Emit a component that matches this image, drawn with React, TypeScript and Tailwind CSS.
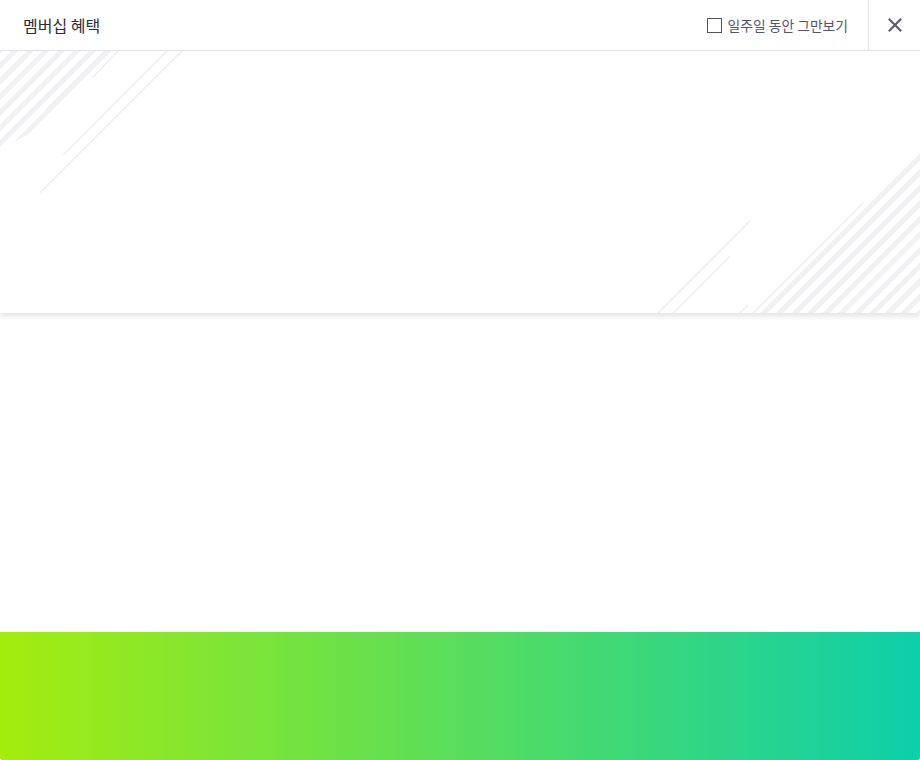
import React from "react";

const font = { fontFamily: '"Noto Sans CJK KR", "Noto Sans", sans-serif' };

function Stripes() {
  return (
    <svg className="absolute inset-0" width="920" height="262" viewBox="0 51 920 262">
      <defs>
        <pattern id="diag" width="11" height="11" patternUnits="userSpaceOnUse" patternTransform="rotate(45)">
          <rect x="0" y="0" width="5" height="11" fill="#f1f1f3" />
        </pattern>
        <clipPath id="tl">
          <polygon points="0,51 112,51 30,133 0,150" />
        </clipPath>
        <clipPath id="br">
          <polygon points="920,152 920,313 758,313" />
        </clipPath>
      </defs>
      <rect x="0" y="51" width="120" height="110" fill="url(#diag)" clipPath="url(#tl)" />
      <rect x="740" y="140" width="180" height="173" fill="url(#diag)" clipPath="url(#br)" />
      <g stroke="#efeff1" strokeWidth="1.6" fill="none">
        <line x1="40" y1="193" x2="182" y2="51" />
        <line x1="63" y1="155" x2="167" y2="51" />
        <line x1="93" y1="77" x2="118" y2="51" />
        <line x1="46" y1="110" x2="105" y2="51" />
        <line x1="658" y1="313" x2="750" y2="221" />
        <line x1="673" y1="313" x2="730" y2="256" />
        <line x1="740" y1="313" x2="748" y2="305" />
        <line x1="753" y1="313" x2="863" y2="203" />
      </g>
    </svg>
  );
}

export default function App() {
  return (
    <div className="w-[920px] h-[760px] flex flex-col bg-white overflow-hidden" style={font}>
      <div className="h-[51px] flex items-center border-b border-[#e6e6e8] shrink-0">
        <p className="pl-[23px] text-[16px] text-[#2b2b3a] flex-1">멤버십 혜택</p>
        <label className="flex items-center gap-[6px] pr-[20px]">
          <span className="w-[15px] h-[15px] border border-[#55556a] bg-white" />
          <span className="text-[13.8px] text-[#55556a]">일주일 동안 그만보기</span>
        </label>
        <button className="w-[52px] h-full border-l border-[#e6e6e8] flex items-center justify-center">
          <svg width="16" height="16" viewBox="0 0 16 16" stroke="#5a5a6e" strokeWidth="2" strokeLinecap="square">
            <line x1="2.5" y1="2.5" x2="13.5" y2="13.5" />
            <line x1="13.5" y1="2.5" x2="2.5" y2="13.5" />
          </svg>
        </button>
      </div>
      <div className="relative h-[262px] shrink-0 bg-white shadow-[0_3px_6px_rgba(0,0,0,0.12)] z-10">
        <Stripes />
      </div>
      <div className="flex-1 bg-white" />
      <div className="h-[128px] shrink-0 rounded-b-[3px] bg-[linear-gradient(to_right,#a4ec0e,#0dcfaa)]" />
    </div>
  );
}
